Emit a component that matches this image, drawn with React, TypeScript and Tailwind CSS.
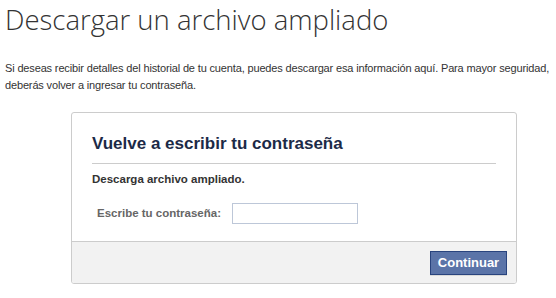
import React from "react";

const App: React.FC = () => {
  return (
    <div className="w-[556px] h-[298px] bg-white pl-[5px] pt-[4px] font-['Liberation_Sans',Arial,sans-serif] text-[#333]">
      {/* Page title */}
      <h1 className="text-[27.5px] leading-[32px] font-['Open_Sans',sans-serif] font-light text-[#333]">
        Descargar un archivo ampliado
      </h1>

      <p className="mt-[24px] text-[11px] leading-[17px] tracking-[-0.15px]">
        Si deseas recibir detalles del historial de tu cuenta, puedes descargar esa información aquí. Para mayor seguridad,
        deberás volver a ingresar tu contraseña.
      </p>

      {/* Password card */}
      <div className="ml-[66px] mt-[18px] w-[446px] border border-[#ccc] rounded-[3px] overflow-hidden">
        <div className="px-[20px] pt-[20px] pb-[17px]">
          <h2 className="text-[17px] leading-[22px] font-bold text-[#1c2a47] pb-[8px] border-b border-[#ccc]">
            Vuelve a escribir tu contraseña
          </h2>
          <div className="mt-[7px] text-[11.5px] font-bold text-[#333]">Descarga archivo ampliado.</div>
          <div className="mt-[15px] flex items-center">
            <label className="w-[140px] pl-[5px] text-[11.5px] font-bold text-[#666]">Escribe tu contraseña:</label>
            <input type="password" className="w-[126px] h-[21px] border border-[#bdc7d8] outline-none" />
          </div>
        </div>
        <div className="bg-[#f2f2f2] border-t border-[#ccc] h-[42px] flex items-center justify-end pr-[9px]">
          <button className="h-[24px] w-[77px] bg-[#5b74a8] border border-[#29447e] text-white text-[13px] font-bold shadow-[0_1px_0_rgba(0,0,0,0.1)]">
            Continuar
          </button>
        </div>
      </div>
    </div>
  );
};

export default App;
